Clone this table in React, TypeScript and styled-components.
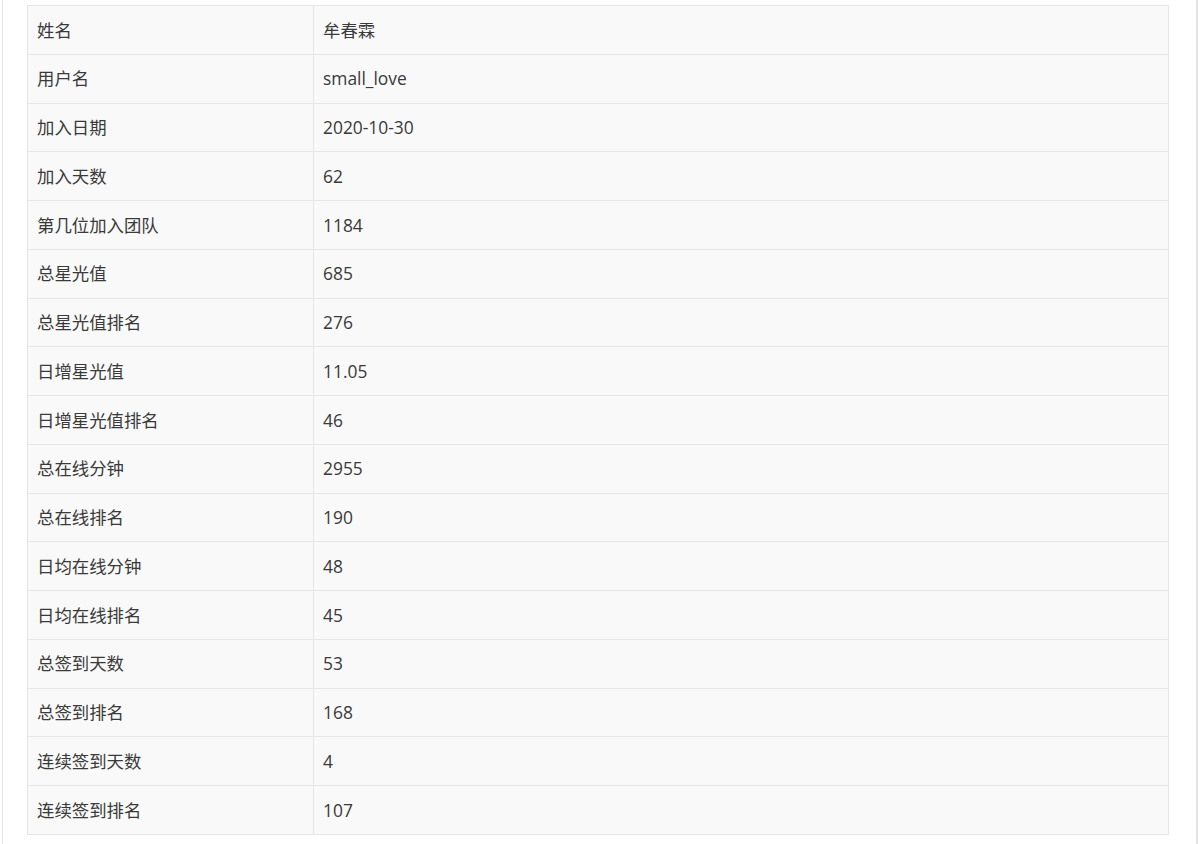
import React from "react";
import styled, { createGlobalStyle } from "styled-components";

const Global = createGlobalStyle`
  html, body { margin: 0; padding: 0; background: #ffffff; }
  body { font-family: "Open Sans", "Noto Sans CJK SC", sans-serif; }
`;

const Page = styled.div`
  box-sizing: border-box;
  width: 1200px;
  height: 844px;
  padding: 0 2px 0 2px;
  background: #ffffff;
`;

const Frame = styled.div`
  box-sizing: border-box;
  height: 844px;
  border-left: 1px solid #e6e6e6;
  border-right: 2px solid #e4e4e4;
  padding: 5px 27px 0 24px;
`;

const Table = styled.table`
  width: 100%;
  border-collapse: collapse;
  background: #f9f9f9;
  color: #3a3a3a;
  font-size: 17.4px;
`;

const Row = styled.tr`
  height: 48.76px;
`;

const Cell = styled.td<{ $label?: boolean }>`
  box-sizing: border-box;
  border: 1px solid #e6e6e6;
  padding: 1px 9px 0;
  vertical-align: middle;
  width: ${(p) => (p.$label ? "286px" : "auto")};
  line-height: 1;
`;

const rows: [string, string][] = [
  ["姓名", "牟春霖"],
  ["用户名", "small_love"],
  ["加入日期", "2020-10-30"],
  ["加入天数", "62"],
  ["第几位加入团队", "1184"],
  ["总星光值", "685"],
  ["总星光值排名", "276"],
  ["日增星光值", "11.05"],
  ["日增星光值排名", "46"],
  ["总在线分钟", "2955"],
  ["总在线排名", "190"],
  ["日均在线分钟", "48"],
  ["日均在线排名", "45"],
  ["总签到天数", "53"],
  ["总签到排名", "168"],
  ["连续签到天数", "4"],
  ["连续签到排名", "107"],
];

export default function App() {
  return (
    <Page>
      <Global />
      <Frame>
        <Table>
          <tbody>
            {rows.map(([k, v]) => (
              <Row key={k}>
                <Cell $label>{k}</Cell>
                <Cell>{v}</Cell>
              </Row>
            ))}
          </tbody>
        </Table>
      </Frame>
    </Page>
  );
}
